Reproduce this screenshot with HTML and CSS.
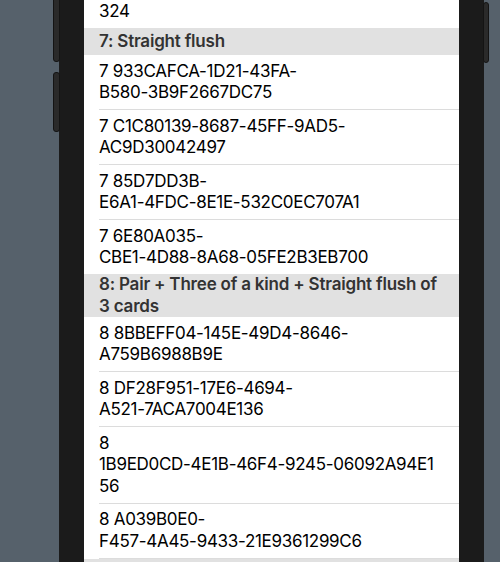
FILE: index.html
```html
<!DOCTYPE html>
<html>
<head>
<meta charset="utf-8">
<link rel="stylesheet" href="styles.css">
</head>
<body>
<div class="phone">
  <div class="btn btn-l1"></div>
  <div class="btn btn-l2"></div>
  <div class="btn btn-r1"></div>
  <div class="screen">
    <div class="row partial">324</div>
    <div class="header">7: Straight flush</div>
    <div class="row">7 933CAFCA-1D21-43FA-<br>B580-3B9F2667DC75</div>
    <div class="row">7 C1C80139-8687-45FF-9AD5-<br>AC9D30042497</div>
    <div class="row">7 85D7DD3B-<br>E6A1-4FDC-8E1E-532C0EC707A1</div>
    <div class="row last">7 6E80A035-<br>CBE1-4D88-8A68-05FE2B3EB700</div>
    <div class="header">8: Pair + Three of a kind + Straight flush of<br>3 cards</div>
    <div class="row">8 8BBEFF04-145E-49D4-8646-<br>A759B6988B9E</div>
    <div class="row">8 DF28F951-17E6-4694-<br>A521-7ACA7004E136</div>
    <div class="row">8<br>1B9ED0CD-4E1B-46F4-9245-06092A94E1<br>56</div>
    <div class="row">8 A039B0E0-<br>F457-4A45-9433-21E9361299C6</div>
    <div class="header"></div>
  </div>
</div>
</body>
</html>
```

FILE: styles.css
```css
html, body {
  margin: 0;
  padding: 0;
}
body {
  background: #56616b;
  height: 562px;
  overflow: hidden;
  font-family: Inter, "Liberation Sans", sans-serif;
}
.phone {
  position: relative;
  margin-left: 59px;
  width: 375px;
  height: 562px;
  padding: 0 25px;
  background: #1b1b1b;
}
.btn {
  position: absolute;
  background: #2a2a2a;
  border: 1px solid #141414;
  box-sizing: border-box;
  border-radius: 3px;
}
.btn-l1 {
  left: -6px;
  top: -4px;
  width: 7px;
  height: 66px;
}
.btn-l2 {
  left: -6px;
  top: 72px;
  width: 7px;
  height: 60px;
}
.btn-r1 {
  right: -5px;
  top: 2px;
  width: 6px;
  height: 61px;
}
.screen {
  background: #fff;
  height: 562px;
  overflow: hidden;
}
.row {
  margin-left: 15px;
  padding: 5.5px 15px 5.5px 0;
  font-size: 17px;
  line-height: 21.5px;
  color: #000;
  border-bottom: 1px solid #dcdcdc;
  letter-spacing: -0.3px;
}
.row.partial {
  padding-top: 0.5px;
  border-bottom: none;
}
.row.last {
  border-bottom: none;
}
.header {
  min-height: 27.5px;
  display: flex;
  align-items: center;
  padding: 0 15px;
  background: #e1e1e1;
  font-size: 17px;
  line-height: 21.5px;
  font-weight: 600;
  color: #333;
  letter-spacing: -0.2px;
}
```
